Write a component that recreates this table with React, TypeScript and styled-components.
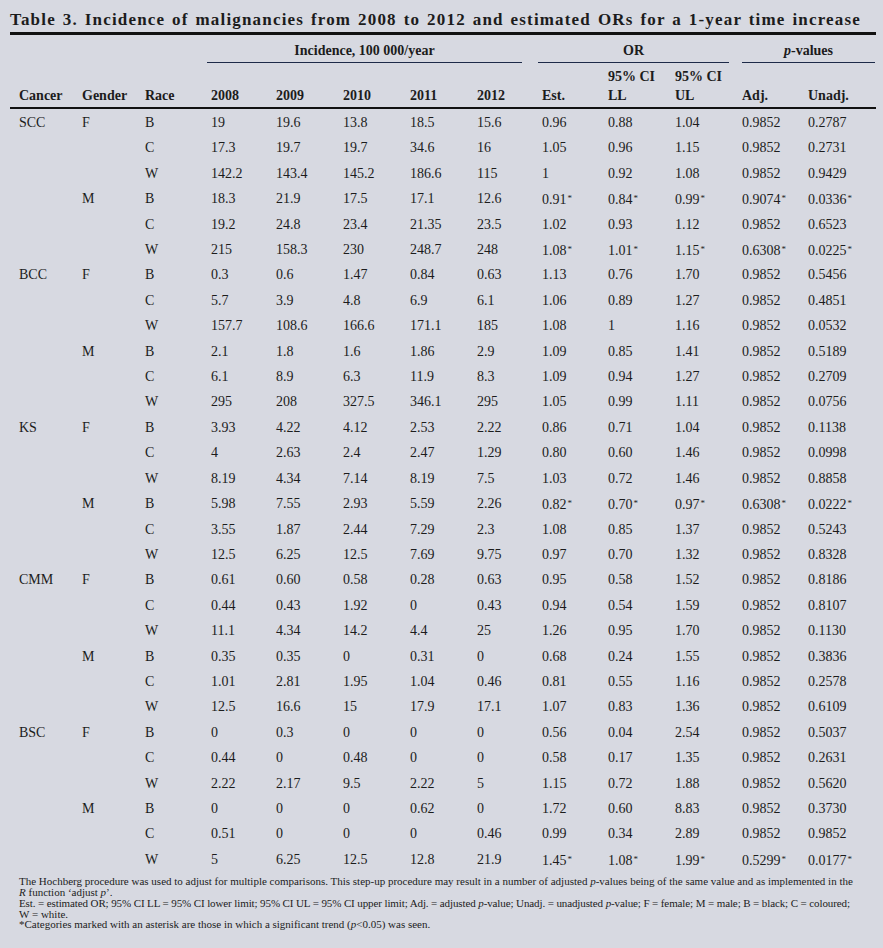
import React from "react";
import styled, { createGlobalStyle } from "styled-components";

const GlobalStyle = createGlobalStyle`
  html, body {
    margin: 0;
    padding: 0;
    background: #d7d9e1;
  }
  body {
    font-family: "Liberation Serif", "Times New Roman", serif;
    color: #1c1c1c;
  }
`;

const COLS = "68px 63px 66px 65px 67px 67px 67px 65px 66px 67px 67px 66px 72px";

const Page = styled.div`
  width: 866px;
  padding: 11px 7px 0 10px;
  box-sizing: content-box;
  min-height: 935px;
`;

const Title = styled.h1`
  margin: 0 0 3px 0;
  padding-left: 0;
  font-size: 17px;
  line-height: 18px;
  font-weight: 700;
  letter-spacing: 1.17px;
  word-spacing: 1.5px;
  white-space: nowrap;
`;

const Rule = styled.div<{ $h: number }>`
  height: ${(p) => p.$h}px;
  background: #111;
`;

const HeadGrid = styled.div`
  display: grid;
  grid-template-columns: ${COLS};
  grid-template-rows: 28px 23px 21px;
  font-weight: 700;
  font-size: 14px;
`;

const GroupHead = styled.div<{ $col: string; $ml?: number; $mr?: number }>`
  grid-row: 1;
  grid-column: ${(p) => p.$col};
  margin-left: ${(p) => p.$ml ?? 0}px;
  margin-right: ${(p) => p.$mr ?? 0}px;
  box-sizing: border-box;
  padding-top: 7px;
  line-height: 18px;
  text-align: center;
  border-bottom: 1px solid #1d2a48;
  white-space: nowrap;
`;

const SubHead = styled.div<{ $col: number }>`
  grid-row: 2;
  grid-column: ${(p) => p.$col};
  padding: 5px 0 0 4px;
  line-height: 18px;
  white-space: nowrap;
`;

const ColHead = styled.div<{ $first?: boolean }>`
  grid-row: 3;
  padding: 1px 0 0 ${(p) => (p.$first ? 9 : 4)}px;
  line-height: 18px;
  white-space: nowrap;
`;

const Body = styled.div`
  display: grid;
  grid-template-columns: ${COLS};
  grid-auto-rows: 25.41px;
  margin-top: 1px;
  font-size: 14px;
`;

const Cell = styled.div<{ $first?: boolean }>`
  padding-left: ${(p) => (p.$first ? 9 : 4)}px;
  line-height: 25.41px;
  white-space: nowrap;
`;

const Star = styled.span`
  font-size: 9px;
  vertical-align: 3px;
  margin-left: 1px;
`;

const Footnote = styled.div`
  margin-top: 4px;
  padding-left: 9px;
  font-size: 11px;
  line-height: 10.8px;
  white-space: nowrap;
`;

const Line = styled.div<{ $spacing?: number }>`
  letter-spacing: ${(p) => p.$spacing ?? 0}px;
`;

const It = styled.i`
  font-style: italic;
`;

type Row = string[];

const rows: Row[] = [
  ["SCC", "F", "B", "19", "19.6", "13.8", "18.5", "15.6", "0.96", "0.88", "1.04", "0.9852", "0.2787"],
  ["", "", "C", "17.3", "19.7", "19.7", "34.6", "16", "1.05", "0.96", "1.15", "0.9852", "0.2731"],
  ["", "", "W", "142.2", "143.4", "145.2", "186.6", "115", "1", "0.92", "1.08", "0.9852", "0.9429"],
  ["", "M", "B", "18.3", "21.9", "17.5", "17.1", "12.6", "0.91*", "0.84*", "0.99*", "0.9074*", "0.0336*"],
  ["", "", "C", "19.2", "24.8", "23.4", "21.35", "23.5", "1.02", "0.93", "1.12", "0.9852", "0.6523"],
  ["", "", "W", "215", "158.3", "230", "248.7", "248", "1.08*", "1.01*", "1.15*", "0.6308*", "0.0225*"],
  ["BCC", "F", "B", "0.3", "0.6", "1.47", "0.84", "0.63", "1.13", "0.76", "1.70", "0.9852", "0.5456"],
  ["", "", "C", "5.7", "3.9", "4.8", "6.9", "6.1", "1.06", "0.89", "1.27", "0.9852", "0.4851"],
  ["", "", "W", "157.7", "108.6", "166.6", "171.1", "185", "1.08", "1", "1.16", "0.9852", "0.0532"],
  ["", "M", "B", "2.1", "1.8", "1.6", "1.86", "2.9", "1.09", "0.85", "1.41", "0.9852", "0.5189"],
  ["", "", "C", "6.1", "8.9", "6.3", "11.9", "8.3", "1.09", "0.94", "1.27", "0.9852", "0.2709"],
  ["", "", "W", "295", "208", "327.5", "346.1", "295", "1.05", "0.99", "1.11", "0.9852", "0.0756"],
  ["KS", "F", "B", "3.93", "4.22", "4.12", "2.53", "2.22", "0.86", "0.71", "1.04", "0.9852", "0.1138"],
  ["", "", "C", "4", "2.63", "2.4", "2.47", "1.29", "0.80", "0.60", "1.46", "0.9852", "0.0998"],
  ["", "", "W", "8.19", "4.34", "7.14", "8.19", "7.5", "1.03", "0.72", "1.46", "0.9852", "0.8858"],
  ["", "M", "B", "5.98", "7.55", "2.93", "5.59", "2.26", "0.82*", "0.70*", "0.97*", "0.6308*", "0.0222*"],
  ["", "", "C", "3.55", "1.87", "2.44", "7.29", "2.3", "1.08", "0.85", "1.37", "0.9852", "0.5243"],
  ["", "", "W", "12.5", "6.25", "12.5", "7.69", "9.75", "0.97", "0.70", "1.32", "0.9852", "0.8328"],
  ["CMM", "F", "B", "0.61", "0.60", "0.58", "0.28", "0.63", "0.95", "0.58", "1.52", "0.9852", "0.8186"],
  ["", "", "C", "0.44", "0.43", "1.92", "0", "0.43", "0.94", "0.54", "1.59", "0.9852", "0.8107"],
  ["", "", "W", "11.1", "4.34", "14.2", "4.4", "25", "1.26", "0.95", "1.70", "0.9852", "0.1130"],
  ["", "M", "B", "0.35", "0.35", "0", "0.31", "0", "0.68", "0.24", "1.55", "0.9852", "0.3836"],
  ["", "", "C", "1.01", "2.81", "1.95", "1.04", "0.46", "0.81", "0.55", "1.16", "0.9852", "0.2578"],
  ["", "", "W", "12.5", "16.6", "15", "17.9", "17.1", "1.07", "0.83", "1.36", "0.9852", "0.6109"],
  ["BSC", "F", "B", "0", "0.3", "0", "0", "0", "0.56", "0.04", "2.54", "0.9852", "0.5037"],
  ["", "", "C", "0.44", "0", "0.48", "0", "0", "0.58", "0.17", "1.35", "0.9852", "0.2631"],
  ["", "", "W", "2.22", "2.17", "9.5", "2.22", "5", "1.15", "0.72", "1.88", "0.9852", "0.5620"],
  ["", "M", "B", "0", "0", "0", "0.62", "0", "1.72", "0.60", "8.83", "0.9852", "0.3730"],
  ["", "", "C", "0.51", "0", "0", "0", "0.46", "0.99", "0.34", "2.89", "0.9852", "0.9852"],
  ["", "", "W", "5", "6.25", "12.5", "12.8", "21.9", "1.45*", "1.08*", "1.99*", "0.5299*", "0.0177*"],
];

const headers = ["Cancer", "Gender", "Race", "2008", "2009", "2010", "2011", "2012", "Est.", "LL", "UL", "Adj.", "Unadj."];

function Value({ v }: { v: string }) {
  if (v.endsWith("*")) {
    return (
      <>
        {v.slice(0, -1)}
        <Star>*</Star>
      </>
    );
  }
  return <>{v}</>;
}

export default function App() {
  return (
    <>
      <GlobalStyle />
      <Page>
        <Title>
          Table 3. Incidence of malignancies from 2008 to 2012 and estimated ORs for a 1-year time increase
        </Title>
        <Rule $h={3} />
        <HeadGrid>
          <GroupHead $col="4 / span 5" $mr={16}>
            Incidence, 100 000/year
          </GroupHead>
          <GroupHead $col="9 / span 3" $mr={9}>
            OR
          </GroupHead>
          <GroupHead $col="12 / span 2" $ml={4} $mr={1}>
            <It>p</It>-values
          </GroupHead>
          <SubHead $col={10}>95% CI</SubHead>
          <SubHead $col={11}>95% CI</SubHead>
          {headers.map((h, i) => (
            <ColHead key={h} $first={i === 0} style={{ gridColumn: i + 1 }}>
              {h}
            </ColHead>
          ))}
        </HeadGrid>
        <Rule $h={2} />
        <Body>
          {rows.map((r, ri) =>
            r.map((v, ci) => (
              <Cell key={`${ri}-${ci}`} $first={ci === 0}>
                <Value v={v} />
              </Cell>
            ))
          )}
        </Body>
        <Footnote>
          <Line>
            The Hochberg procedure was used to adjust for multiple comparisons. This step-up procedure may result in a
            number of adjusted <It>p</It>-values being of the same value and as implemented in the
          </Line>
          <Line>
            <It>R</It> function ‘adjust <It>p</It>’.
          </Line>
          <Line $spacing={-0.11}>
            Est. = estimated OR; 95% CI LL = 95% CI lower limit; 95% CI UL = 95% CI upper limit; Adj. = adjusted{" "}
            <It>p</It>-value; Unadj. = unadjusted <It>p</It>-value; F = female; M = male; B = black; C = coloured;
          </Line>
          <Line>W = white.</Line>
          <Line>
            *Categories marked with an asterisk are those in which a significant trend (<It>p</It>&lt;0.05) was seen.
          </Line>
        </Footnote>
      </Page>
    </>
  );
}
